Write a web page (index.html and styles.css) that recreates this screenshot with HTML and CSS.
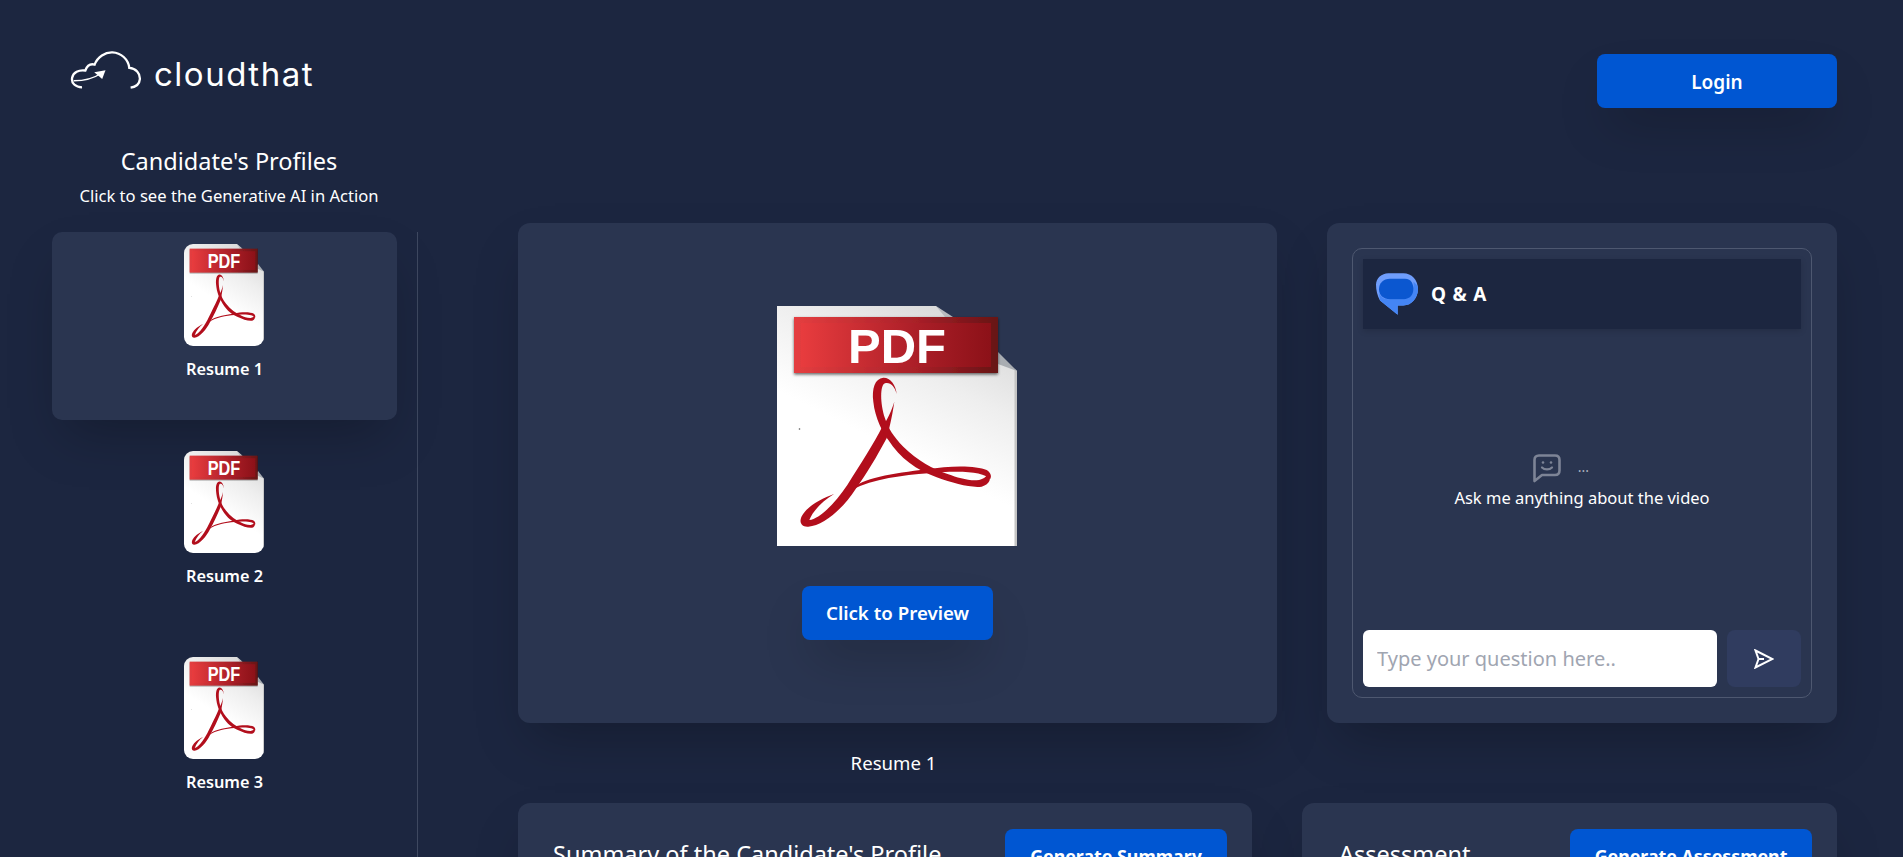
FILE: index.html
```html
<!DOCTYPE html>
<html lang="en">
<head>
<meta charset="utf-8">
<title>CloudThat - Candidate's Profiles</title>
<link rel="stylesheet" href="styles.css">
</head>
<body>
<svg class="defs" width="0" height="0" aria-hidden="true">
  <defs>
    <linearGradient id="pageGrad" x1="0.8" y1="0" x2="0.5" y2="0.6">
      <stop offset="0" stop-color="#d6d6d6"/>
      <stop offset="0.5" stop-color="#eeeeee"/>
      <stop offset="1" stop-color="#ffffff"/>
    </linearGradient>
    <linearGradient id="bannerOuter" x1="0" y1="0" x2="1" y2="0">
      <stop offset="0" stop-color="#e53e40"/>
      <stop offset="0.6" stop-color="#a92028"/>
      <stop offset="1" stop-color="#661315"/>
    </linearGradient>
    <linearGradient id="bannerInner" x1="0" y1="0" x2="1" y2="0">
      <stop offset="0" stop-color="#e83c3e"/>
      <stop offset="0.6" stop-color="#ac1f28"/>
      <stop offset="1" stop-color="#8c1118"/>
    </linearGradient>
    <filter id="bannerShadow" x="-5%" y="-10%" width="110%" height="130%">
      <feDropShadow dx="0" dy="1.500" stdDeviation="1.500" flood-color="#000" flood-opacity="0.6"/>
    </filter>
    <symbol id="pdf" viewBox="0 0 240 240" preserveAspectRatio="none">
      <path d="M0 0H159L240 65V240H0Z" fill="url(#pageGrad)"/>
      <path d="M237.500 63V240H240V65Z" fill="#c4c4c4"/>
      <path d="M159 0L176 11H168Z" fill="#b9bcc0"/>
      <path d="M221 46L240 65L221 58Z" fill="#a9adb2"/>
      <rect x="17" y="11" width="204" height="56" fill="url(#bannerOuter)" filter="url(#bannerShadow)"/>
      <rect x="24" y="17" width="190" height="44" fill="url(#bannerInner)"/>
      <text class="pdf-word" x="120" y="57" text-anchor="middle">PDF</text>
      <g fill="#b20e1c" transform="translate(-17 -16) scale(.3333)">
        <path d="M403 335C398 370 392 400 380 445C352 497 317 557 287 597C252 652 192 707 145 710C123 712 116 695 126 677C143 648 185 625 222 612C190 632 160 660 148 690C178 688 225 640 262 585C300 525 345 455 366 412C385 385 395 360 403 335Z"/>
        <path d="M410 312C408 285 390 262 370 263C345 265 335 295 340 335C345 385 370 430 385 450C420 505 470 540 530 562C580 580 630 594 665 590C690 584 697 562 682 550C680 560 672 569 650 571C620 572 590 562 565 553C520 538 470 510 430 470C400 440 385 415 375 385C360 340 360 285 375 280C390 275 405 290 410 312Z"/>
        <path d="M275 600C300 565 400 550 500 538C570 526 650 526 680 540C693 548 696 560 690 568C680 552 640 545 590 545C560 545 530 547 505 550C430 556 340 566 275 600Z"/>
      </g>
      <circle cx="22.500" cy="123" r=".8" fill="#555"/>
    </symbol>
  </defs>
</svg>

<div class="page">
  <header class="topbar">
    <a class="logo" href="#">
      <svg class="logo-cloud" viewBox="90 60 215 115" fill="none" stroke="#fff" stroke-width="7" aria-hidden="true">
        <path d="M125 170C105 170 92 157 95 141C98 125 115 116 135 119C140 105 150 98 163 101C172 78 195 63 217 64C243 65 265 85 268 111C288 112 301 128 300 145C299 158 290 168 272 171"/>
        <path d="M100 150C130 150 160 143 182 128" stroke-width="4"/>
        <path d="M196 118L162 124L186 145Z" fill="#fff" stroke="none"/>
      </svg>
      <span class="logo-text">cloudthat</span>
    </a>
    <button class="btn btn-login">Login</button>
  </header>

  <div class="content">
    <aside class="sidebar">
      <div class="sidebar-head">
        <h2>Candidate's Profiles</h2>
        <p>Click to see the Generative AI in Action</p>
      </div>
      <div class="resume-list">
        <div class="resume resume-active">
          <svg class="pdf-small" aria-hidden="true"><use href="#pdf"/></svg>
          <span>Resume 1</span>
        </div>
        <div class="resume">
          <svg class="pdf-small" aria-hidden="true"><use href="#pdf"/></svg>
          <span>Resume 2</span>
        </div>
        <div class="resume">
          <svg class="pdf-small" aria-hidden="true"><use href="#pdf"/></svg>
          <span>Resume 3</span>
        </div>
      </div>
    </aside>

    <main class="main">
      <div class="row-top">
        <section class="card preview">
          <svg class="pdf-large" aria-hidden="true"><use href="#pdf"/></svg>
          <button class="btn btn-preview">Click to Preview</button>
        </section>
        <section class="card qa">
          <div class="qa-box">
            <div class="qa-head">
              <svg class="qa-logo" viewBox="108 100 126 125" aria-hidden="true">
                <path d="M145 100H190C215 100 234 120 234 147C234 175 215 197 190 197H173V225L120 182C112 168 108 150 108 135C108 115 125 100 145 100Z" fill="#6f9dfb"/>
                <path d="M120 182L173 225V197H190C215 197 234 175 234 147C234 140 232 135 220 125C222 135 222 165 190 178H150C135 178 125 175 117 160Z" fill="#4485f5"/>
                <path d="M150 117H195C215 117 220 135 220 147C220 165 210 178 190 178H150C130 178 117 165 117 148C117 130 130 117 150 117Z" fill="#0b57d0"/>
              </svg>
              <span>Q &amp; A</span>
            </div>
            <div class="qa-empty">
              <div class="qa-hint">
                <svg class="smile" viewBox="0 0 28 29" fill="none" stroke="#7d8496" stroke-width="2.600" aria-hidden="true">
                  <path d="M6 1.500H22C25 1.500 26.500 3 26.500 6V16.500C26.500 19.500 25 21 22 21H9L1.500 27V6C1.500 3 3 1.500 6 1.500Z" stroke-linejoin="round"/>
                  <circle cx="10" cy="8.500" r="1.300" fill="#7d8496" stroke="none"/>
                  <circle cx="18" cy="8.500" r="1.300" fill="#7d8496" stroke="none"/>
                  <path d="M9 13.500C11.500 16 16.500 16 19 13.500" stroke-width="2.200" stroke-linecap="round"/>
                </svg>
                <span class="dots">...</span>
              </div>
              <p>Ask me anything about the video</p>
            </div>
            <div class="qa-input">
              <input type="text" placeholder="Type your question here..">
              <button class="send" aria-label="Send">
                <svg viewBox="0 0 20 20" fill="none" stroke="#fff" stroke-width="2" aria-hidden="true">
                  <path d="M1.500 1.500L18.500 10L1.500 18.500L4.500 10ZM4.500 10H10" stroke-linejoin="miter"/>
                </svg>
              </button>
            </div>
          </div>
        </section>
      </div>
      <p class="caption">Resume 1</p>
      <div class="row-bottom">
        <section class="card tool tool-summary">
          <h3>Summary of the Candidate's Profile</h3>
          <button class="btn btn-tool btn-summary">Generate Summary</button>
        </section>
        <section class="card tool tool-assess">
          <h3>Assessment</h3>
          <button class="btn btn-tool btn-assess">Generate Assessment</button>
        </section>
      </div>
    </main>
  </div>
</div>
</body>
</html>
```

FILE: styles.css
```css
* { box-sizing: border-box; }
html, body { margin: 0; height: 857px; overflow: hidden; }
body {
  background: #1c2640;
  color: #fff;
  font-family: "Noto Sans", "Open Sans", sans-serif;
}
.defs { position: absolute; }
.pdf-word {
  font-family: "Liberation Sans", sans-serif;
  font-weight: 700;
  font-size: 49px;
  fill: #fff;
}
.page { padding: 51px 66px 0 52px; }

.topbar { display: flex; justify-content: space-between; align-items: flex-start; }
.logo { display: flex; align-items: flex-end; gap: 12px; margin-left: 18px; height: 38px; color: #fff; text-decoration: none; }
.logo-cloud { width: 72px; height: 38px; }
.logo-text { font-family: Inter, sans-serif; font-weight: 400; font-size: 33px; line-height: 38px; letter-spacing: 1.500px; position: relative; top: 4px; }

.btn {
  border: 0;
  border-radius: 8px;
  background: #0056d2;
  color: #fff;
  font-family: inherit;
  font-weight: 600;
  font-size: 19px;
}
.btn-login { width: 240px; height: 54px; margin-top: 3px; padding-top: 2px; box-shadow: 0 25px 50px -12px rgba(0,0,0,.25); }

.content { display: flex; align-items: flex-start; }
.sidebar { width: 366px; flex: none; margin-top: -9px; }
.sidebar-head { width: 345px; padding: 47px 0 0 9px; height: 133px; text-align: center; }
.sidebar-head h2 { margin: 0; font-weight: 400; font-size: 23.500px; line-height: 30px; }
.sidebar-head p { margin: 9px 0 0; font-size: 16.600px; line-height: 22px; }
.resume-list { display: flex; flex-direction: column; gap: 18.500px; padding-right: 20px; border-right: 1px solid #3e4860; height: 700px; }
.resume {
  height: 188px;
  padding-top: 12px;
  border-radius: 10px;
  display: flex;
  flex-direction: column;
  align-items: center;
  font-weight: 600;
  font-size: 16.300px;
}
.resume-active { background: #2a3550; box-shadow: 0 25px 50px -12px rgba(0,0,0,.25); }
.pdf-small { width: 80px; height: 102px; border-radius: 9px; margin: 0 2px 12px 0; }
.resume span { line-height: 22px; }

.main { width: 1319px; margin-left: 100px; padding-top: 115px; }
.row-top { display: flex; gap: 50px; }
.row-bottom { display: flex; gap: 50px; margin-top: 27px; }
.card { background: #2a3550; border-radius: 12px; box-shadow: 0 25px 50px -12px rgba(0,0,0,.25); }
.preview { width: 759px; height: 500px; display: flex; flex-direction: column; align-items: center; padding-top: 83px; }
.pdf-large { width: 240px; height: 240px; margin-right: 1px; }
.btn-preview { width: 191px; height: 54px; margin-top: 40px; padding-bottom: 2px; box-shadow: 0 25px 50px -12px rgba(0,0,0,.25); font-size: 18.700px; }

.qa { width: 510px; height: 500px; padding: 25px; }
.qa-box { height: 450px; border: 1px solid #4e5870; border-radius: 10px; padding: 10px; display: flex; flex-direction: column; }
.qa-head {
  height: 70px;
  flex: none;
  background: #1c2640;
  box-shadow: 0 2px 6px rgba(0,0,0,.15);
  display: flex;
  align-items: center;
  gap: 13px;
  padding-left: 13px;
  font-weight: 700;
  font-size: 19px;
  letter-spacing: .8px;
}
.qa-logo { width: 42px; height: 42px; }
.qa-empty { flex: 1; text-align: center; padding-top: 124px; }
.qa-hint { display: flex; justify-content: center; align-items: center; gap: 17px; height: 30px; margin-right: 42px; }
.smile { width: 28px; height: 29px; }
.dots { font-size: 14px; line-height: 18px; color: #aab0bd; position: relative; top: -1px; }
.qa-empty p { margin: 3px 0 0; font-size: 16.500px; line-height: 24px; }
.qa-input { display: flex; gap: 10px; height: 57px; flex: none; }
.qa-input input {
  width: 354px;
  border: 0;
  border-radius: 6px;
  background: #fff;
  padding: 0 14px;
  font-family: inherit;
  font-size: 20px;
  outline: none;
}
.qa-input input::placeholder { color: #a0a5b1; }
.send { width: 74px; border: 0; border-radius: 8px; background: #303c5f; display: flex; align-items: center; justify-content: center; }
.send svg { width: 20px; height: 20px; }

.caption { margin: 27px 8px 0 0; width: 751px; text-align: center; font-size: 18.600px; line-height: 26px; }

.tool { height: 280px; display: flex; align-items: flex-start; justify-content: space-between; padding-top: 26px; }
.tool h3 { margin: 9px 0 0; font-weight: 400; font-size: 23.500px; line-height: 32px; }
.tool-summary { width: 734px; padding-left: 35px; padding-right: 25px; }
.tool-assess { width: 535px; padding-left: 37px; padding-right: 25px; }
.btn-tool { height: 54px; font-size: 17.800px; font-weight: 700; }
.btn-summary { width: 222px; }
.btn-assess { width: 242px; }
```
